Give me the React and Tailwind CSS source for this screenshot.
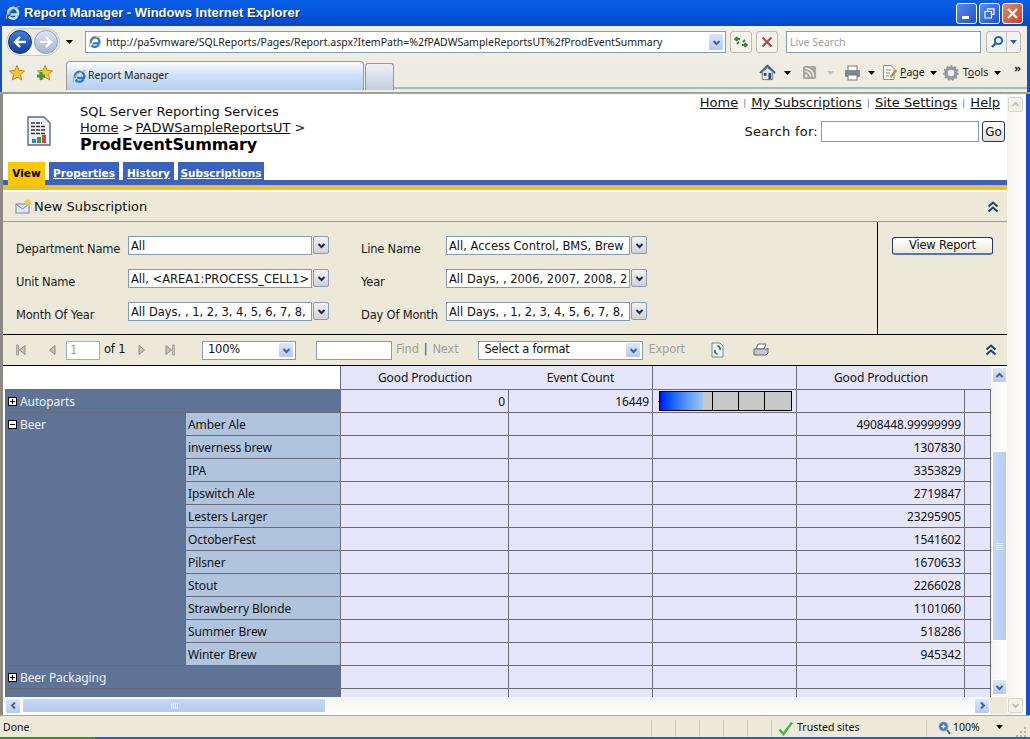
import React from 'react';

const Chevron = ({ dir = 'down', color = '#4d6185', size = 9 }) => {
  const d = {
    down: 'M1.5 3 L4.5 6 L7.5 3',
    up: 'M1.5 6 L4.5 3 L7.5 6',
    left: 'M6 1.5 L3 4.5 L6 7.5',
    right: 'M3 1.5 L6 4.5 L3 7.5',
  }[dir];
  return (
    <svg width={size} height={size} viewBox="0 0 9 9">
      <path d={d} fill="none" stroke={color} strokeWidth="2" />
    </svg>
  );
};

const IeLogo = ({ size = 16, color = '#2a78d0' }) => (
  <svg width={size} height={size} viewBox="0 0 16 16">
    <path d="M3.4 9.5 A5 5 0 1 1 12.8 9.5 L5.5 9.5 M12.3 11.2 A5 5 0 0 1 3.8 11.5" fill="none" stroke={color} strokeWidth="2.6" />
    <path d="M1.5 14 C0 10 6 3 14.5 1.5" fill="none" stroke="#d9a832" strokeWidth="1.1" />
  </svg>
);

const Star = ({ plus }) => (
  <svg width="18" height="18" viewBox="0 0 18 18">
    <path d="M9 1.5 L11.2 6.5 L16.5 7 L12.5 10.6 L13.7 16 L9 13.2 L4.3 16 L5.5 10.6 L1.5 7 L6.8 6.5 Z" fill="#f7c23c" stroke="#c98a16" strokeWidth="1" />
    {plus && <path d="M5 8 V16 M1 12 H9" stroke="#3a9a32" strokeWidth="3" />}
  </svg>
);

const TriDown = ({ color = '#000' }) => (
  <svg width="7" height="4" viewBox="0 0 7 4"><path d="M0 0 H7 L3.5 4 Z" fill={color} /></svg>
);

const DoubleUp = () => (
  <svg width="12" height="12" viewBox="0 0 12 12">
    <path d="M1.5 5.5 L6 1.5 L10.5 5.5 M1.5 10.5 L6 6.5 L10.5 10.5" fill="none" stroke="#29405f" strokeWidth="2" />
  </svg>
);

const NavTri = ({ dir, bar }) => (
  <svg width="12" height="12" viewBox="0 0 12 12">
    {dir === 'left' ? (
      <path d="M9 1.5 V10.5 L3.5 6 Z" fill="#c4c2b6" stroke="#8e8d85" />
    ) : (
      <path d="M3 1.5 V10.5 L8.5 6 Z" fill="#c4c2b6" stroke="#8e8d85" />
    )}
    {bar && <rect x={dir === 'left' ? 0.5 : 9.5} y="1" width="2" height="10" fill="#c4c2b6" stroke="#8e8d85" strokeWidth="0.6" />}
  </svg>
);

const XpButton = ({ dir = 'down', className = '' }) => (
  <div className={`flex items-center justify-center rounded-[2px] border border-white bg-gradient-to-b from-[#dbe6fb] to-[#b4c9f4] ${className}`}>
    <Chevron dir={dir} />
  </div>
);

const ParamDrop = () => (
  <div className="w-[16px] h-[18px] flex items-center justify-center rounded-[2px] border border-[#8d99ae] bg-gradient-to-b from-[#f2f2f2] to-[#cfd1d8]">
    <Chevron color="#1c3050" />
  </div>
);

const Param = ({ label, value, labelW }) => (
  <div className="flex h-[19px]">
    <div className={`${labelW} text-[11.5px] leading-[13px] text-[#1a1a1a] pt-[7px] font-['DejaVu_Sans',sans-serif] tracking-[-0.2px]`}>{label}</div>
    <div className="flex gap-[1px]">
      <div className="w-[184px] h-[19px] bg-white border border-[#7f9db9] px-[2px] text-[11.5px] leading-[18px] whitespace-nowrap overflow-hidden font-['DejaVu_Sans',sans-serif] text-[#111]">{value}</div>
      <ParamDrop />
    </div>
  </div>
);

const PlusBox = ({ minus }) => (
  <svg width="9" height="9" viewBox="0 0 9 9" className="shrink-0">
    <rect x="0" y="0" width="9" height="9" fill="#000" />
    <rect x="1" y="1" width="7" height="7" fill="#fff" />
    <path d={minus ? 'M2 4.5 H7' : 'M2 4.5 H7 M4.5 2 V7'} stroke="#000" strokeWidth="1" />
  </svg>
);

const GRID = 'border-r border-b border-[#6c6c78]';

const Blank = () => <div className={`bg-[#e6e6fa] ${GRID}`} />;
const Value = ({ v }) => (
  <div className={`bg-[#e6e6fa] ${GRID} flex items-center justify-end pr-[3px] pt-[1px] text-[#111]`}>{v}</div>
);

const RowHead = ({ label, minus }) => (
  <div className={`col-span-2 bg-[#5f7396] ${GRID} flex items-center gap-[3px] pl-[3px] pt-[1px] text-[#eef0f5]`}>
    {label && <PlusBox minus={minus} />}
    {label}
  </div>
);

const Sub = ({ label }) => (
  <div className={`bg-[#b0c4de] ${GRID} flex items-center pl-[2px] pt-[1px] text-[#111]`}>{label}</div>
);

const beer = [
  ['Amber Ale', '4908448.99999999'],
  ['inverness brew', '1307830'],
  ['IPA', '3353829'],
  ['Ipswitch Ale', '2719847'],
  ['Lesters Larger', '23295905'],
  ['OctoberFest', '1541602'],
  ['Pilsner', '1670633'],
  ['Stout', '2266028'],
  ['Strawberry Blonde', '1101060'],
  ['Summer Brew', '518286'],
  ['Winter Brew', '945342'],
];

const EmptyRow = ({ label }) => (
  <>
    <RowHead label={label} />
    <Blank /><Blank /><Blank /><Blank /><Blank />
  </>
);

const ReportGrid = () => (
  <div className="w-[986px] h-[331px] overflow-hidden">
    <div className="grid grid-cols-[181px_155px_168px_144px_144px_168px_26px] grid-rows-[24px] auto-rows-[23px] text-[12px] tracking-[-0.1px] font-['Noto_Sans',sans-serif]">
      {/* header */}
      <div className={`col-span-2 bg-white ${GRID}`} />
      <div className="bg-[#e6e6fa] border-b border-[#6c6c78] flex items-center justify-center pt-[1px] text-[#111]">Good Production</div>
      <div className={`bg-[#e6e6fa] ${GRID} flex items-center justify-center pt-[1px] text-[#111]`}>Event Count</div>
      <Blank />
      <div className="col-span-2 bg-[#e6e6fa] border-b border-[#6c6c78] flex items-center justify-center pr-[26px] pt-[1px] text-[#111]">Good Production</div>

      {/* autoparts */}
      <RowHead label="Autoparts" />
      <Value v="0" />
      <Value v="16449" />
      <div className={`bg-[#e6e6fa] ${GRID} flex items-center pl-[5px]`}>
        <div className="w-[1px] h-[1px] bg-black" />
        <div className="w-[133px] h-[20px] border border-black bg-[#c8c8c8] flex">
          <div className="w-[43px] bg-gradient-to-r from-[#0000ff] to-[#9cc8ec]" />
          <div className="w-[10px] border-r border-black" />
          <div className="w-[26px] border-r border-black" />
          <div className="w-[26px] border-r border-black" />
        </div>
      </div>
      <Blank />
      <Blank />

      {/* beer */}
      <div className={`row-span-11 bg-[#5f7396] ${GRID} flex items-start gap-[3px] pl-[3px] pt-[3px] text-[#eef0f5]`}>
        <span className="mt-[4px]"><PlusBox minus /></span>
        Beer
      </div>
      {beer.map(([name, v]) => (
        <React.Fragment key={name}>
          <Sub label={name} />
          <Blank /><Blank /><Blank />
          <Value v={v} />
          <Blank />
        </React.Fragment>
      ))}

      <EmptyRow label="Beer Packaging" />
      <EmptyRow label="" />
    </div>
  </div>
);

const VScroll = () => (
  <div className="w-[16px] h-[331px] bg-gradient-to-r from-[#f4f3ee] to-white flex flex-col items-center py-[1px]">
    <XpButton dir="up" className="w-[15px] h-[16px]" />
    <div className="h-[68px]" />
    <div className="w-[15px] h-[190px] rounded-[2px] border border-white bg-gradient-to-r from-[#c5d6f8] to-[#b7cbf5] flex flex-col items-center justify-center gap-[1px]">
      <div className="w-[7px] h-[1px] bg-[#eef3fe]" />
      <div className="w-[7px] h-[1px] bg-[#eef3fe]" />
      <div className="w-[7px] h-[1px] bg-[#eef3fe]" />
      <div className="w-[7px] h-[1px] bg-[#eef3fe]" />
    </div>
    <div className="h-[38px]" />
    <XpButton dir="down" className="w-[15px] h-[16px]" />
  </div>
);

const HScroll = () => (
  <div className="h-[17px] flex items-center bg-gradient-to-b from-[#f4f3ee] to-white">
    <div className="w-[2px]" />
    <XpButton dir="left" className="w-[16px] h-[16px]" />
    <div className="w-[304px] h-[15px] ml-[1px] rounded-[2px] border border-white bg-gradient-to-b from-[#c5d6f8] to-[#b7cbf5] flex items-center justify-center gap-[1px]">
      <div className="w-[1px] h-[6px] bg-[#eef3fe]" />
      <div className="w-[1px] h-[6px] bg-[#eef3fe]" />
      <div className="w-[1px] h-[6px] bg-[#eef3fe]" />
      <div className="w-[1px] h-[6px] bg-[#eef3fe]" />
    </div>
    <div className="w-[648px]" />
    <XpButton dir="right" className="w-[16px] h-[16px]" />
    <div className="flex-1 h-full bg-[#ece9d8]" />
  </div>
);

const TitleBar = () => (
  <div className="h-[26px] shrink-0 flex items-center pl-[5px] pr-[7px] bg-gradient-to-b from-[#0a5fe6] via-[#0554e0] to-[#0448c8] font-['Liberation_Sans',sans-serif]">
    <IeLogo size={16} color="#c4e2ff" />
    <div className="ml-[3px] text-[13px] font-bold tracking-[0.02px] text-white [text-shadow:1px_1px_0_#0a2a80] whitespace-nowrap">Report Manager - Windows Internet Explorer</div>
    <div className="flex-1" />
    <div className="flex gap-[2px]">
      <div className="w-[21px] h-[21px] rounded-[3px] border border-white bg-gradient-to-br from-[#5a8cf0] to-[#2050d0] flex items-end pl-[5px] pb-[4px]">
        <div className="w-[7px] h-[3px] bg-white" />
      </div>
      <div className="w-[21px] h-[21px] rounded-[3px] border border-white bg-gradient-to-br from-[#5a8cf0] to-[#2050d0] flex items-center justify-center">
        <svg width="11" height="11" viewBox="0 0 11 11"><path d="M3.5 3 V0.8 H10 V6.5 H8 M1 3.5 H7.5 V10 H1 Z" fill="none" stroke="#fff" strokeWidth="1.2" /></svg>
      </div>
      <div className="w-[21px] h-[21px] rounded-[3px] border border-white bg-gradient-to-br from-[#e8866a] to-[#c8401c] flex items-center justify-center">
        <svg width="13" height="13" viewBox="0 0 13 13"><path d="M2 2 L11 11 M11 2 L2 11" stroke="#fff" strokeWidth="2.2" /></svg>
      </div>
    </div>
  </div>
);

const NavBar = () => (
  <div className="h-[32px] shrink-0 flex items-center bg-gradient-to-b from-[#f1f0e8] to-[#efeee2] border-l-[2px] border-r-[3px] border-[#0d50d0] font-['Noto_Sans',sans-serif]">
    <div className="ml-[4px] w-[54px] h-[28px] rounded-full bg-gradient-to-b from-[#e4e4e4] to-[#fbfbfb] border border-[#c8c8c8] flex items-center gap-[2px] pl-[1px]">
      <div className="w-[24px] h-[24px] rounded-full bg-gradient-to-b from-[#3f7fe0] to-[#123f96] border border-[#123070] flex items-center justify-center">
        <svg width="14" height="12" viewBox="0 0 14 12"><path d="M7 1 L2 6 L7 11 M2 6 H13" fill="none" stroke="#fff" strokeWidth="2.4" /></svg>
      </div>
      <div className="w-[24px] h-[24px] rounded-full bg-gradient-to-b from-[#dfe6f3] to-[#a7b4cc] border border-[#94a0b8] flex items-center justify-center">
        <svg width="14" height="12" viewBox="0 0 14 12"><path d="M7 1 L12 6 L7 11 M12 6 H1" fill="none" stroke="#fff" strokeWidth="2.2" /></svg>
      </div>
    </div>
    <div className="ml-[6px]"><TriDown /></div>
    <div className="ml-[12px] w-[641px] h-[22px] bg-white border border-[#7f9db9] flex items-center pl-[2px]">
      <IeLogo size={14} />
      <span className="ml-[4px] pt-[1px] text-[10.5px] text-[#222] whitespace-nowrap">http://pa5vmware/SQLReports/Pages/Report.aspx?ItemPath=%2fPADWSampleReportsUT%2fProdEventSummary</span>
      <div className="flex-1" />
      <XpButton className="w-[16px] h-[18px] mr-[1px]" />
    </div>
    <div className="ml-[4px] w-[22px] h-[22px] rounded-[3px] border border-[#bdbbac] bg-[#f4f3ec] flex items-center justify-center">
      <svg width="14" height="12" viewBox="0 0 14 12"><path d="M6 3 H1.5 M3.5 1 L1 3 L3.5 5 M8 9 H12.5 M10.5 7 L13 9 L10.5 11 M3 8 L5 6 M11 4 L9 6" fill="none" stroke="#2f8a30" strokeWidth="1.8" /></svg>
    </div>
    <div className="ml-[4px] w-[22px] h-[22px] rounded-[3px] border border-[#bdbbac] bg-[#f4f3ec] flex items-center justify-center">
      <svg width="12" height="12" viewBox="0 0 12 12"><path d="M1.5 1.5 L10.5 10.5 M10.5 1.5 L1.5 10.5" stroke="#b84a48" strokeWidth="2.2" /></svg>
    </div>
    <div className="ml-[8px] w-[195px] h-[22px] bg-white border border-[#7f9db9] flex items-center pl-[3px] pt-[1px] text-[10.5px] text-[#a0a0a0]">Live Search</div>
    <div className="ml-[5px] w-[35px] h-[22px] rounded-[3px] border border-[#bdbbac] bg-[#f2f3f0] flex">
      <div className="w-[20px] border-r border-[#c8c8bc] flex items-center justify-center">
        <svg width="14" height="14" viewBox="0 0 14 14"><circle cx="8.5" cy="5.5" r="3.6" fill="none" stroke="#1e5fd0" strokeWidth="2" /><path d="M6 8 L2 12" stroke="#1e5fd0" strokeWidth="2.4" /></svg>
      </div>
      <div className="flex-1 flex items-center justify-center"><TriDown color="#1e5fd0" /></div>
    </div>
  </div>
);

const TabBar = () => (
  <div className="h-[34px] shrink-0 flex bg-[#efede1] border-l-[2px] border-r-[3px] border-[#0d50d0] font-['Noto_Sans',sans-serif]">
    <div className="ml-[6px] pt-[6px] flex gap-[10px] w-[50px]">
      <Star />
      <Star plus />
    </div>
    <div className="ml-[8px] mt-[3px] w-[298px] h-[29px] rounded-t-[4px] border border-b-0 border-[#9a9a92] bg-gradient-to-b from-[#fdfdfd] via-[#cde0f8] to-[#b5cff3] flex items-center pl-[5px] gap-[1px]">
      <IeLogo size={15} />
      <span className="text-[10.5px] text-[#222]">Report Manager</span>
    </div>
    <div className="ml-[1px] mt-[5px] w-[29px] h-[27px] rounded-t-[3px] border border-b-0 border-[#9a9a92] bg-gradient-to-b from-[#eef0f4] to-[#c3cde0]" />
    <div className="flex-1 h-[31px] flex items-center justify-end pr-[6px] border-b-[2px] border-[#a8b4cc] text-[10.5px] text-[#222]">
      <svg width="17" height="17" viewBox="0 0 18 17"><path d="M1 9 L9 1.5 L17 9" fill="none" stroke="#2c5aa8" strokeWidth="2" /><path d="M3.5 8 V16 H14.5 V8 L9 3.5 Z" fill="#e9e9e4" stroke="#6a7a8c" /><rect x="10" y="9" width="3" height="7" fill="#25507f" /><rect x="5" y="9" width="3" height="3" fill="#25507f" /></svg>
      <span className="ml-[8px]"><TriDown /></span>
      <svg className="ml-[11px]" width="15" height="15" viewBox="0 0 16 16"><rect x="1" y="1" width="14" height="14" rx="2" fill="#a8a79c" /><circle cx="4.5" cy="11.5" r="1.5" fill="#eee" /><path d="M3.5 7 A5.5 5.5 0 0 1 9 12.5 M3.5 3.5 A9 9 0 0 1 12.5 12.5" fill="none" stroke="#eee" strokeWidth="1.6" /></svg>
      <span className="ml-[10px]"><TriDown color="#c4c4bc" /></span>
      <svg className="ml-[10px]" width="17" height="16" viewBox="0 0 17 16"><rect x="4" y="1" width="9" height="5" fill="#fff" stroke="#777" /><rect x="1" y="5" width="15" height="7" rx="1" fill="#7c8a94" /><rect x="4" y="10" width="9" height="5" fill="#fff" stroke="#777" /></svg>
      <span className="ml-[7px]"><TriDown /></span>
      <svg className="ml-[7px]" width="16" height="17" viewBox="0 0 16 17"><path d="M1.5 1.5 H9 L12 4.5 V15.5 H1.5 Z" fill="#fbfbf6" stroke="#8b8f95" /><path d="M4 6 H9 M4 9 H8 M4 12 H7" stroke="#889" /><path d="M14.5 6 L8.5 13" stroke="#c08a28" strokeWidth="2" /></svg>
      <span className="ml-[2px]"><u>P</u>age</span>
      <span className="ml-[5px]"><TriDown /></span>
      <svg className="ml-[6px]" width="16" height="16" viewBox="0 0 16 16"><circle cx="8" cy="8" r="5" fill="none" stroke="#8f9aa4" strokeWidth="3.4" /><circle cx="8" cy="8" r="7" fill="none" stroke="#8f9aa4" strokeWidth="1.6" strokeDasharray="2 2" /></svg>
      <span className="ml-[4px]">T<u>o</u>ols</span>
      <span className="ml-[6px]"><TriDown /></span>
      <span className="ml-[13px] mb-[10px] text-[11px] font-bold leading-none">»</span>
    </div>
  </div>
);

const PageHeader = () => (
  <div className="h-[68px] flex bg-white font-['DejaVu_Sans',sans-serif] text-[13px] text-[#111]">
    <div className="w-[77px] pl-[24px] pt-[22px]">
      <svg width="24" height="30" viewBox="0 0 24 30">
        <path d="M1 1 H17 L23 7 V29 H1 Z" fill="#f1f3f8" stroke="#5a6a88" strokeWidth="1.4" />
        <path d="M4 7 H15 M4 10.5 H19 M4 14 H19 M4 17.5 H19" stroke="#333" strokeWidth="1.4" strokeDasharray="4 1" />
        <rect x="5" y="23" width="4" height="4" fill="#2f7fd0" />
        <rect x="10" y="21" width="4" height="6" fill="#2fa04a" />
        <rect x="15" y="19" width="4" height="8" fill="#d04a30" />
      </svg>
    </div>
    <div className="pt-[10px] leading-[16px] whitespace-nowrap">
      <div>SQL Server Reporting Services</div>
      <div><u>Home</u> &gt; <span className="-ml-[2px]"><u>PADWSampleReportsUT</u></span> &gt;</div>
      <div className="text-[16px] font-bold leading-[17px] tracking-[-0.1px] text-black">ProdEventSummary</div>
    </div>
    <div className="flex-1 flex flex-col items-end pr-[2px] pt-[1px]">
      <div className="flex items-center pr-[5px] leading-[16px]">
        <u>Home</u><span className="mx-[5px] text-[9px] text-[#5a7ab0]">|</span>
        <u>My Subscriptions</u><span className="mx-[5px] text-[9px] text-[#5a7ab0]">|</span>
        <u>Site Settings</u><span className="mx-[5px] text-[9px] text-[#5a7ab0]">|</span>
        <u>Help</u>
      </div>
      <div className="mt-[10px] flex items-center">
        <span className="tracking-[0.25px]">Search for:</span>
        <div className="ml-[3px] w-[158px] h-[21px] border border-[#7f9db9] bg-white" />
        <div className="ml-[3px] w-[23px] h-[21px] rounded-[3px] border border-[#1c3a6e] bg-gradient-to-b from-white to-[#e4e2d6] flex items-center justify-center text-[12px]">Go</div>
      </div>
    </div>
  </div>
);

const Tabs = () => (
  <div>
    <div className="h-[18px] flex bg-white pl-[5px] font-['DejaVu_Sans',sans-serif] text-[10.5px] font-bold leading-[16px]">
      <div className="w-[37px] h-[18px] pt-[3px] bg-[#fdc800] text-center text-black">View</div>
      <div className="ml-[4px] w-[70px] pt-[3px] bg-[#3a63c0] text-center text-white underline">Properties</div>
      <div className="ml-[4px] w-[51px] pt-[3px] bg-[#3a63c0] text-center text-white underline">History</div>
      <div className="ml-[4px] w-[86px] pt-[3px] bg-[#3a63c0] text-center text-white underline">Subscriptions</div>
    </div>
    <div className="h-[5px] flex bg-[#3a63c0] pl-[1px]">
      <div className="w-[4px]" />
      <div className="w-[37px] bg-[#fdc800]" />
    </div>
    <div className="h-[5px] bg-[#eac12c]" />
    <div className="h-[2px] bg-white" />
  </div>
);

const SubscriptionBar = () => (
  <div className="h-[30px] flex items-center justify-between bg-[#ece9d8] border-b border-[#9c9a8c] pl-[12px] pr-[8px] font-['DejaVu_Sans',sans-serif] text-[13px] text-[#111]">
    <div className="flex items-center gap-[2px]">
      <svg width="17" height="15" viewBox="0 0 17 15"><rect x="1" y="5" width="13" height="9" fill="#dfe8f7" stroke="#7088aa" /><path d="M1 5 L7.5 10 L14 5" fill="none" stroke="#7088aa" /><circle cx="13" cy="3.5" r="3" fill="#f6c840" /></svg>
      New Subscription
    </div>
    <DoubleUp />
  </div>
);

const ParamsPanel = () => (
  <div className="h-[113px] flex bg-[#ece9d8] border-b border-black">
    <div className="w-[875px] border-r border-black pl-[13px] pt-[14px] flex flex-col gap-[14px]">
      <div className="flex gap-[32px]">
        <Param label="Department Name" value="All" labelW="w-[112px]" />
        <Param label="Line Name" value="All, Access Control, BMS, Brew" labelW="w-[85px]" />
      </div>
      <div className="flex gap-[32px]">
        <Param label="Unit Name" value="All, <AREA1:PROCESS_CELL1>" labelW="w-[112px]" />
        <Param label="Year" value="All Days, , 2006, 2007, 2008, 2" labelW="w-[85px]" />
      </div>
      <div className="flex gap-[32px]">
        <Param label="Month Of Year" value="All Days, , 1, 2, 3, 4, 5, 6, 7, 8," labelW="w-[112px]" />
        <Param label="Day Of Month" value="All Days, , 1, 2, 3, 4, 5, 6, 7, 8," labelW="w-[85px]" />
      </div>
    </div>
    <div className="pl-[14px] pt-[15px]">
      <div className="w-[101px] h-[18px] rounded-[3px] border border-[#1c3a6e] border-b-[2px] border-b-[#4a78c8] bg-gradient-to-b from-white to-[#ece9d8] flex items-center justify-center text-[11.5px] font-['DejaVu_Sans',sans-serif] tracking-[-0.2px] text-[#111]">View Report</div>
    </div>
  </div>
);

const Toolbar = () => (
  <div className="h-[31px] flex items-center bg-[#ece9d8] border-b border-black pl-[13px] font-['DejaVu_Sans',sans-serif] text-[11.5px] tracking-[-0.2px] text-[#111]">
    <NavTri dir="left" bar />
    <div className="ml-[18px]"><NavTri dir="left" /></div>
    <div className="ml-[8px] w-[34px] h-[19px] bg-white border border-[#9fb0c0] pl-[3px] leading-[17px] text-[#a0a0a0]">1</div>
    <span className="ml-[4px] w-[22px] whitespace-nowrap">of 1</span>
    <div className="ml-[10px]"><NavTri dir="right" /></div>
    <div className="ml-[15px]"><NavTri dir="right" bar /></div>
    <div className="ml-[27px] w-[94px] h-[19px] bg-white border border-[#7f9db9] pl-[5px] flex items-center justify-between pr-[1px]">
      100%
      <XpButton className="w-[16px] h-[16px]" />
    </div>
    <div className="ml-[20px] w-[76px] h-[19px] bg-white border border-[#7f9db9]" />
    <span className="ml-[4px] text-[#a0a0a0]">Find</span>
    <span className="ml-[5px] text-[#444]">|</span>
    <span className="ml-[5px] text-[#a0a0a0]">Next</span>
    <div className="ml-[20px] w-[165px] h-[19px] bg-white border border-[#7f9db9] pl-[5px] flex items-center justify-between pr-[1px]">
      Select a format
      <XpButton className="w-[16px] h-[16px]" />
    </div>
    <span className="ml-[5px] text-[#a0a0a0]">Export</span>
    <svg className="ml-[26px]" width="13" height="16" viewBox="0 0 13 16"><path d="M1 1 H9 L12 4 V15 H1 Z" fill="#eef4ee" stroke="#7088a0" /><path d="M6.5 4 A3 3 0 0 1 9 8 M6.5 12 A3 3 0 0 1 4 8" fill="none" stroke="#1e8a3a" strokeWidth="1.8" /></svg>
    <svg className="ml-[29px]" width="16" height="14" viewBox="0 0 16 14"><path d="M5 1 H13 L11 6 H3 Z" fill="#fff" stroke="#667" /><path d="M1 6 H14 L15 5 V10 L13 12 H1 Z" fill="#c4c8d0" stroke="#667" /></svg>
    <div className="flex-1" />
    <div className="mr-[10px]"><DoubleUp /></div>
  </div>
);

const PageScroll = () => (
  <div className="w-[19px] bg-gradient-to-r from-[#f4f3ee] to-white flex flex-col items-start">
    <div className="mt-[3px] ml-[1px] w-[15px] h-[15px] rounded-[2px] border border-[#d8d8cc] bg-[#f2f1e9] flex items-center justify-center">
      <Chevron dir="up" color="#c4c3ba" />
    </div>
    <div className="flex-1" />
    <div className="mb-[2px] ml-[1px] w-[15px] h-[15px] rounded-[2px] border border-[#d8d8cc] bg-[#f2f1e9] flex items-center justify-center">
      <Chevron dir="down" color="#c4c3ba" />
    </div>
  </div>
);

const StatusBar = () => (
  <div className="h-[22px] shrink-0 flex items-center bg-[#ece9d8] border-t border-[#aca899] pl-[3px] pt-[3px] text-[10.5px] text-[#111] font-['Noto_Sans',sans-serif]">
    <span className="w-[648px]">Done</span>
    {[0, 1, 2, 3, 4].map(i => (
      <div key={i} className="w-[24px] h-[17px] border-l border-[#cfccb8]" />
    ))}
    <div className="w-[155px] h-[17px] border-l border-[#cfccb8] flex items-center pl-[6px]">
      <svg width="15" height="15" viewBox="0 0 15 15"><path d="M1.5 8.5 L5.5 13 L14 1.5" fill="none" stroke="#4cb848" strokeWidth="2.6" /></svg>
      <span className="ml-[4px]">Trusted sites</span>
    </div>
    <div className="w-[88px] h-[17px] border-l border-[#cfccb8] flex items-center pl-[11px]">
      <svg width="13" height="14" viewBox="0 0 13 14"><circle cx="5.5" cy="5.5" r="4.5" fill="#3a78d8" stroke="#8aa0c0" /><path d="M3.5 5.5 H7.5 M5.5 3.5 V7.5" stroke="#fff" strokeWidth="1.4" /><path d="M9 9 L12 13" stroke="#7a5a28" strokeWidth="2" /></svg>
      <span className="ml-[2px]">100%</span>
      <span className="ml-[16px] mb-[2px]"><TriDown /></span>
    </div>
    <svg className="ml-[1px] mt-[6px]" width="12" height="12" viewBox="0 0 12 12"><path d="M9 2 H11 V4 H9 Z M5 6 H7 V8 H5 Z M9 6 H11 V8 H9 Z M1 10 H3 V12 H1 Z M5 10 H7 V12 H5 Z M9 10 H11 V12 H9 Z" fill="#b4b1a0" /></svg>
  </div>
);

export default function App() {
  return (
    <div className="w-[1030px] h-[739px] flex flex-col overflow-hidden bg-[#ece9d8]">
      <TitleBar />
      <NavBar />
      <TabBar />
      <div className="h-[623px] shrink-0 flex bg-white border-t-[2px] border-[#a2a296]">
        <div className="w-[3px] bg-[#8a8a82]" />
        <div className="w-[1004px] flex flex-col">
          <PageHeader />
          <Tabs />
          <SubscriptionBar />
          <ParamsPanel />
          <Toolbar />
          <div className="flex pl-[2px] bg-white">
            <ReportGrid />
            <VScroll />
          </div>
          <HScroll />
        </div>
        <PageScroll />
        <div className="flex-1 bg-[#0d50d0]" />
      </div>
      <StatusBar />
      <div className="h-[2px] flex">
        <div className="w-[95px] bg-[#3c8a3c]" />
        <div className="flex-1 bg-[#2a5ec8]" />
      </div>
    </div>
  );
}
